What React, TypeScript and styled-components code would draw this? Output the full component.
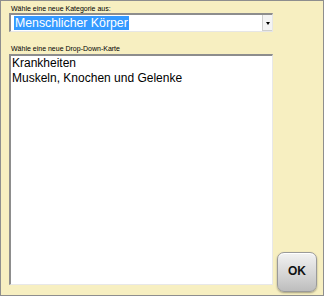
import styled, { createGlobalStyle } from "styled-components"

const GlobalStyle = createGlobalStyle`
  html, body {
    margin: 0;
    padding: 0;
    background: #ffffff;
  }
  body {
    font-family: "Liberation Sans", Arial, sans-serif;
  }
`

const items = ["Krankheiten", "Muskeln, Knochen und Gelenke"]

export default function App() {
  return (
    <>
      <GlobalStyle />
      <Frame>
        <Label>Wähle eine neue Kategorie aus:</Label>
        <Select>
          <Selected>Menschlicher Körper</Selected>
          <ArrowButton>
            <Arrow />
          </ArrowButton>
        </Select>
        <Label $top={12}>Wähle eine neue Drop-Down-Karte</Label>
        <ListRow>
          <ListBox>
            {items.map((item) => (
              <Item key={item}>{item}</Item>
            ))}
          </ListBox>
          <OkButton>OK</OkButton>
        </ListRow>
      </Frame>
    </>
  )
}

const Frame = styled.div`
  box-sizing: border-box;
  width: 324px;
  height: 296px;
  border: 1px solid #8e8e8e;
  background: #f7efc1;
  display: flex;
  flex-direction: column;
  padding: 3px 0 3px 8px;
`

const Label = styled.div<{ $top?: number }>`
  font-size: 7px;
  line-height: 9px;
  color: #000;
  margin-left: 2px;
  margin-top: ${({ $top }) => $top || 0}px;
  white-space: nowrap;
`

const Select = styled.div`
  box-sizing: border-box;
  width: 264px;
  height: 19px;
  display: flex;
  align-items: stretch;
  background: #fff;
  border-top: 2px solid #8d8d8d;
  border-left: 2px solid #8d8d8d;
  border-right: 1px solid #e6e6e6;
  border-bottom: 1px solid #e6e6e6;
  padding: 1px 0 1px 3px;
`

const Selected = styled.span`
  background: #3399ff;
  color: #fff;
  font-size: 12.3px;
  line-height: 14px;
  padding: 0 1px;
  white-space: nowrap;
`

const ArrowButton = styled.div`
  box-sizing: border-box;
  margin-left: auto;
  margin-top: -1px;
  margin-bottom: -1px;
  width: 10px;
  display: flex;
  align-items: center;
  justify-content: center;
  background: #f4f4f4;
  border-left: 1px solid #cfcfcf;
  border-bottom: 1px solid #cfcfcf;
`

const Arrow = styled.div`
  width: 0;
  height: 0;
  border-left: 2.5px solid transparent;
  border-right: 2.5px solid transparent;
  border-top: 3px solid #000;
  margin-top: 1px;
`

const ListRow = styled.div`
  display: flex;
  align-items: flex-end;
  gap: 4px;
  margin-top: 1px;
`

const ListBox = styled.div`
  box-sizing: border-box;
  width: 264px;
  height: 231px;
  margin-bottom: 7px;
  background: #fff;
  border-top: 2px solid #8d8d8d;
  border-left: 2px solid #8d8d8d;
  border-right: 1px solid #e8e8e8;
  border-bottom: 1px solid #e8e8e8;
  padding: 0 0 0 1px;
`

const Item = styled.div`
  font-size: 12px;
  line-height: 15px;
  color: #000;
  white-space: nowrap;
`

const OkButton = styled.div`
  box-sizing: border-box;
  width: 40px;
  height: 40px;
  border-radius: 7px;
  border: 1px solid #9a9a9a;
  background: linear-gradient(#f2f2f2, #d6d6d6 55%, #bdbdbd);
  box-shadow: inset 0 1px 0 #fff, 0 1px 2px rgba(0, 0, 0, 0.35);
  display: flex;
  align-items: center;
  justify-content: center;
  font-size: 12px;
  font-weight: bold;
  color: #111;
  padding-bottom: 3px;
`
